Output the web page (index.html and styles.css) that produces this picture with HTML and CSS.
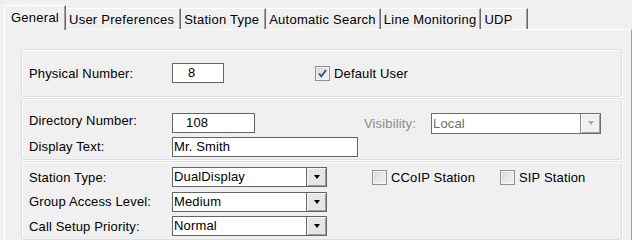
FILE: index.html
```html
<!DOCTYPE html>
<html>
<head>
<meta charset="utf-8">
<link rel="stylesheet" href="styles.css">
</head>
<body>
<div class="tabs">
  <div class="tab active">General</div>
  <div class="tab">User Preferences</div>
  <div class="tab">Station Type</div>
  <div class="tab tight">Automatic Search</div>
  <div class="tab tight">Line Monitoring</div>
  <div class="tab udp">UDP</div>
</div>
<div class="panel">
  <div class="group g1">
    <span class="label">Physical Number:</span>
    <div class="field num-phys">8</div>
    <div class="check default-user">
      <span class="box"><svg width="13" height="13" viewBox="0 0 13 13"><path d="M3 6.5 L5.3 9.2 L10 3" fill="none" stroke="#2d4f95" stroke-width="1.9"/></svg></span>
      <span>Default User</span>
    </div>
  </div>
  <div class="group g2">
    <span class="label lab-dir">Directory Number:</span>
    <div class="field num-dir">108</div>
    <span class="label disabled lab-vis">Visibility:</span>
    <div class="combo disabled vis"><span class="value">Local</span><span class="btn"><i class="arrow"></i></span></div>
    <span class="label lab-disp">Display Text:</span>
    <div class="field text-disp">Mr. Smith</div>
  </div>
  <div class="group g3">
    <span class="label">Station Type:</span>
    <div class="combo"><span class="value">DualDisplay</span><span class="btn"><i class="arrow"></i></span></div>
    <div class="check ccoip"><span class="box"></span><span>CCoIP Station</span></div>
    <div class="check"><span class="box"></span><span>SIP Station</span></div>
    <span class="label">Group Access Level:</span>
    <div class="combo"><span class="value">Medium</span><span class="btn"><i class="arrow"></i></span></div>
    <span class="spacer"></span><span class="spacer"></span>
    <span class="label">Call Setup Priority:</span>
    <div class="combo"><span class="value">Normal</span><span class="btn"><i class="arrow"></i></span></div>
  </div>
</div>
</body>
</html>
```

FILE: styles.css
```css
html, body {
  margin: 0;
  padding: 0;
  background: #f0f0f0;
  font-family: "Liberation Sans", Arial, sans-serif;
  font-size: 13px;
  letter-spacing: 0.15px;
  color: #000;
  width: 632px;
  height: 240px;
  overflow: hidden;
}

.tabs {
  display: flex;
  align-items: flex-end;
  height: 29px;
  padding-left: 4px;
}

.tab {
  box-sizing: border-box;
  height: 21px;
  padding: 3px 6px 0 3px;
  line-height: 15px;
  letter-spacing: 0.25px;
  white-space: nowrap;
  border-top: 1px solid #ffffff;
  border-right: 1px solid #696969;
  box-shadow: inset -1px 0 0 #a0a0a0;
}

.tab.tight {
  padding-right: 4px;
}

.tab.active {
  position: relative;
  height: 25px;
  margin-bottom: -1px;
  padding: 4px 6px 0 6px;
  border-left: 1px solid #ffffff;
  background: #f0f0f0;
  z-index: 1;
}

.tab.udp {
  padding-right: 14px;
}

.panel {
  box-sizing: border-box;
  margin-left: 4px;
  height: 211px;
  border-top: 1px solid #ffffff;
  border-left: 1px solid #ffffff;
  border-right: 1px solid #a0a0a0;
  padding: 19px 9px 0 16px;
  display: flex;
  flex-direction: column;
  gap: 1px;
}

.group {
  box-sizing: border-box;
  border: 1px solid #d5dfe5;
  border-radius: 3px;
  box-shadow: inset 1px 1px 0 #ffffff, 1px 1px 0 #ffffff;
  padding: 0 7px;
}

.g1 {
  height: 48px;
  display: flex;
  align-items: center;
}

.g1 .label {
  width: 143px;
}

.g2 {
  height: 62px;
  padding-top: 14px;
  display: grid;
  grid-template-columns: 143px 186px 73px 170px;
  grid-template-rows: 20px 20px;
  row-gap: 4px;
  align-items: center;
}

.g2 .lab-vis {
  padding-left: 6px;
}

.g2 .lab-dir {
  margin-top: -5px;
}

.g2 .lab-disp {
  margin-top: -2px;
}

.g2 .text-disp {
  grid-column: 2 / 4;
  width: 186px;
}

.g3 {
  flex: 1;
  padding-top: 5px;
  display: grid;
  grid-template-columns: 143px 155px 173px auto;
  grid-template-rows: 20px 20px 20px;
  row-gap: 4.5px;
  align-items: center;
  align-content: start;
}

.g3 .combo {
  width: 155px;
}

.g3 .ccoip {
  padding-left: 45px;
}

.label {
  white-space: nowrap;
}

.label.disabled {
  color: #8a8a8a;
}

.field {
  box-sizing: border-box;
  height: 20px;
  line-height: 18px;
  background: #fff;
  border: 1px solid #646464;
  white-space: nowrap;
}

.num-phys {
  width: 52px;
  padding-left: 15px;
}

.num-dir {
  width: 83px;
  padding-left: 13px;
}

.text-disp {
  padding-left: 1px;
}

.check {
  display: flex;
  align-items: center;
  gap: 4px;
  white-space: nowrap;
}

.default-user {
  margin-left: 91px;
}

.box {
  box-sizing: border-box;
  flex-shrink: 0;
  width: 15px;
  height: 15px;
  border: 1px solid #8e8f8f;
  background: linear-gradient(135deg, #d8d8d8 0%, #f4f4f4 100%);
  box-shadow: inset 0 0 0 1px #f4f4f4;
  display: flex;
  align-items: center;
  justify-content: center;
}

.box svg {
  display: block;
}

.combo {
  box-sizing: border-box;
  height: 20px;
  display: flex;
  background: #fff;
  border: 1px solid #646464;
}

.combo .value {
  flex: 1;
  line-height: 18px;
  padding-left: 1px;
}

.combo .btn {
  box-sizing: border-box;
  width: 20px;
  border-left: 1px solid #646464;
  background: #e6e6e6;
  box-shadow: inset 1px 1px 0 #f8f8f8, inset -1px -1px 0 #a0a0a0;
  display: flex;
  align-items: center;
  justify-content: center;
}

.arrow {
  width: 0;
  height: 0;
  border-left: 3.5px solid transparent;
  border-right: 3.5px solid transparent;
  border-top: 4px solid #000;
}

.combo.disabled {
  height: 21px;
  border-color: #6d6d6d;
}

.combo.disabled .value {
  color: #6d6d6d;
  line-height: 19px;
}

.combo.disabled .btn {
  background: #f0f0f0;
  border-left-color: #8a8a8a;
}

.combo.disabled .arrow {
  border-top-color: #a8a8a8;
}
```
